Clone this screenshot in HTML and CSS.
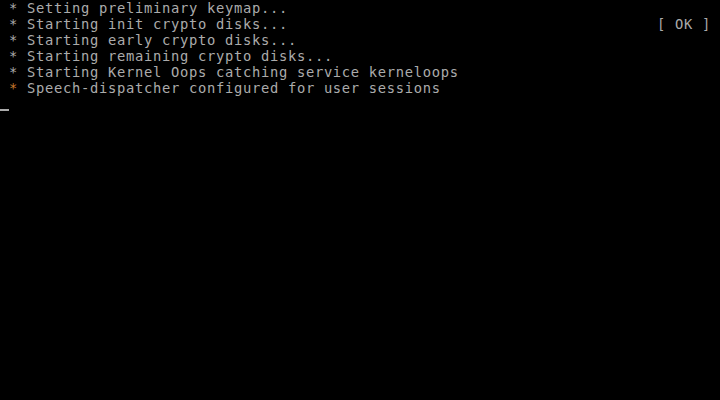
FILE: index.html
```html
<!DOCTYPE html>
<html lang="en">
<head>
  <meta charset="UTF-8">
  <title>tty1</title>
  <link rel="stylesheet" href="styles.css">
</head>
<body>
  <div class="console">
    <div class="line"><span class="msg"> <span class="star">*</span> Setting preliminary keymap...</span></div>
    <div class="line"><span class="msg"> <span class="star">*</span> Starting init crypto disks...</span><span class="status">[ OK ]</span></div>
    <div class="line"><span class="msg"> <span class="star">*</span> Starting early crypto disks...</span></div>
    <div class="line"><span class="msg"> <span class="star">*</span> Starting remaining crypto disks...</span></div>
    <div class="line"><span class="msg"> <span class="star">*</span> Starting Kernel Oops catching service kerneloops</span></div>
    <div class="line"><span class="msg"> <span class="star warn">*</span> Speech-dispatcher configured for user sessions</span></div>
    <div class="line"><span class="cursor"></span></div>
  </div>
</body>
</html>
```

FILE: styles.css
```css
html, body {
  margin: 0;
  height: 100%;
  background: #000;
}
.console {
  width: 720px;
  height: 400px;
  font-family: "DejaVu Sans Mono", "Liberation Mono", monospace;
  font-size: 13.8px;
  letter-spacing: 0.69px;
  line-height: 16px;
  color: #ababab;
  overflow: hidden;
}
.line {
  display: flex;
  justify-content: space-between;
  align-items: center;
  height: 16px;
  padding-right: 9px;
  white-space: pre;
}
.star.warn {
  color: #c8782c;
}
.cursor {
  display: block;
  width: 9px;
  height: 2px;
  margin-top: 12px;
  background: #ababab;
}
```
